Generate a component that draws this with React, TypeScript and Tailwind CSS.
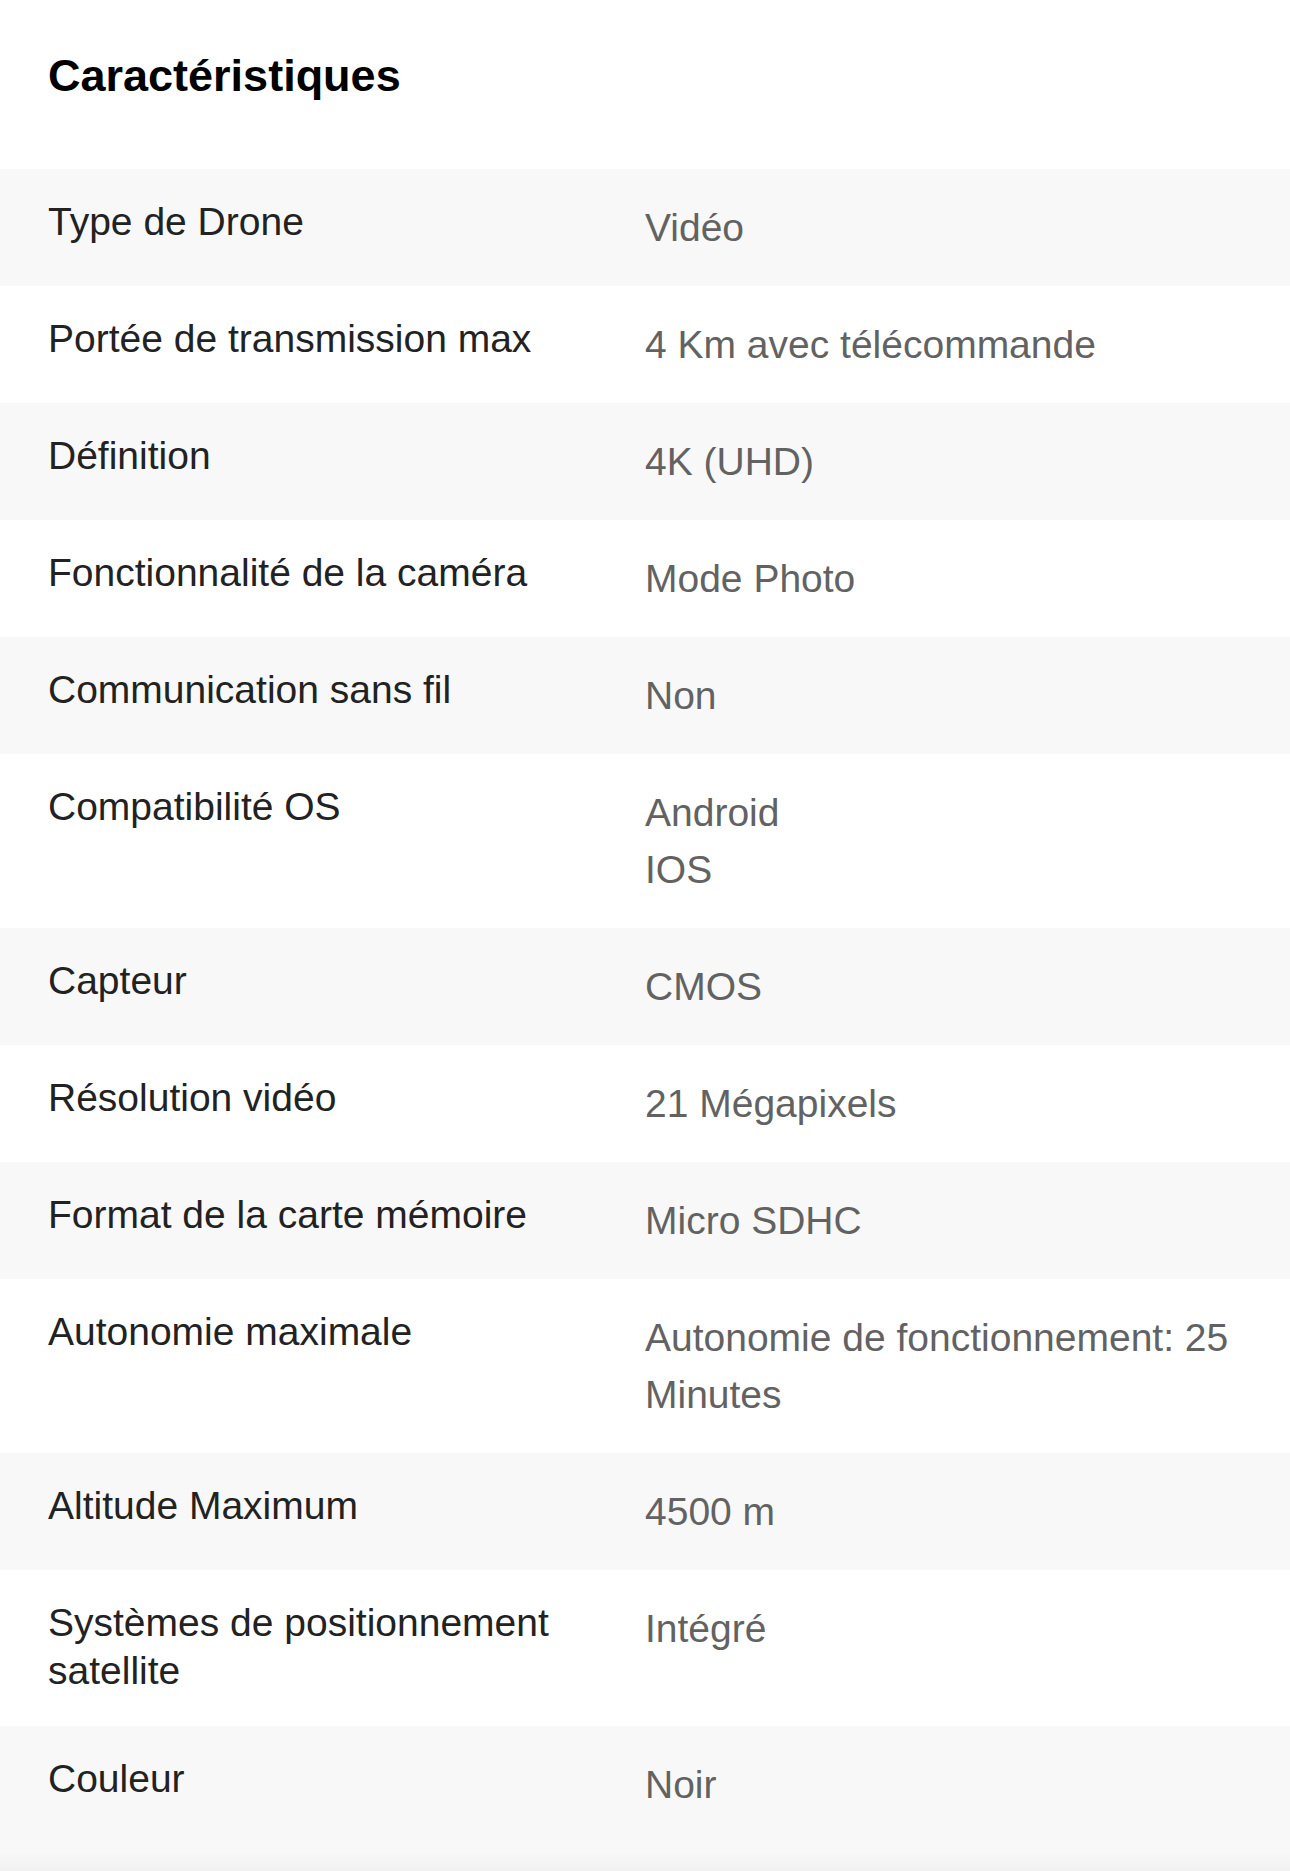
import React from "react";

const rows: { label: string; value: string[] }[] = [
  { label: "Type de Drone", value: ["Vidéo"] },
  { label: "Portée de transmission max", value: ["4 Km avec télécommande"] },
  { label: "Définition", value: ["4K (UHD)"] },
  { label: "Fonctionnalité de la caméra", value: ["Mode Photo"] },
  { label: "Communication sans fil", value: ["Non"] },
  { label: "Compatibilité OS", value: ["Android", "IOS"] },
  { label: "Capteur", value: ["CMOS"] },
  { label: "Résolution vidéo", value: ["21 Mégapixels"] },
  { label: "Format de la carte mémoire", value: ["Micro SDHC"] },
  { label: "Autonomie maximale", value: ["Autonomie de fonctionnement: 25 Minutes"] },
  { label: "Altitude Maximum", value: ["4500 m"] },
  { label: "Systèmes de positionnement satellite", value: ["Intégré"] },
  { label: "Couleur", value: ["Noir"] },
];

export default function App() {
  return (
    <div
      className="w-[1290px] min-h-[1871px] bg-white flex flex-col"
      style={{ fontFamily: '"Liberation Sans", Arial, Helvetica, sans-serif' }}
    >
      <div className="h-[169px] pl-[48px] pt-[53px]">
        <h2 className="text-[45px] leading-[45px] font-bold text-black">Caractéristiques</h2>
      </div>
      <div className="flex flex-col">
        {rows.map((r, i) => (
          <div
            key={r.label}
            className={
              "flex pt-[29px] pb-[31px] " + (i % 2 === 0 ? "bg-[#f8f8f8]" : "bg-white")
            }
          >
            <div className="w-[645px] pl-[48px] pr-[48px] text-[39px] leading-[48px] text-[#222222]">
              {r.label}
            </div>
            <div className="w-[645px] pr-[48px] pt-[1px] -mb-[1px] text-[39px] leading-[57px] text-[#626262]">
              {r.value.map((v) => (
                <div key={v}>{v}</div>
              ))}
            </div>
          </div>
        ))}
      </div>
      <div className="flex-1 flex flex-col bg-[#f8f8f8]">
        <div className="flex-1" />
        <div className="h-[20px] bg-gradient-to-b from-[#f8f8f8] to-[#f1f1f1]" />
      </div>
    </div>
  );
}
